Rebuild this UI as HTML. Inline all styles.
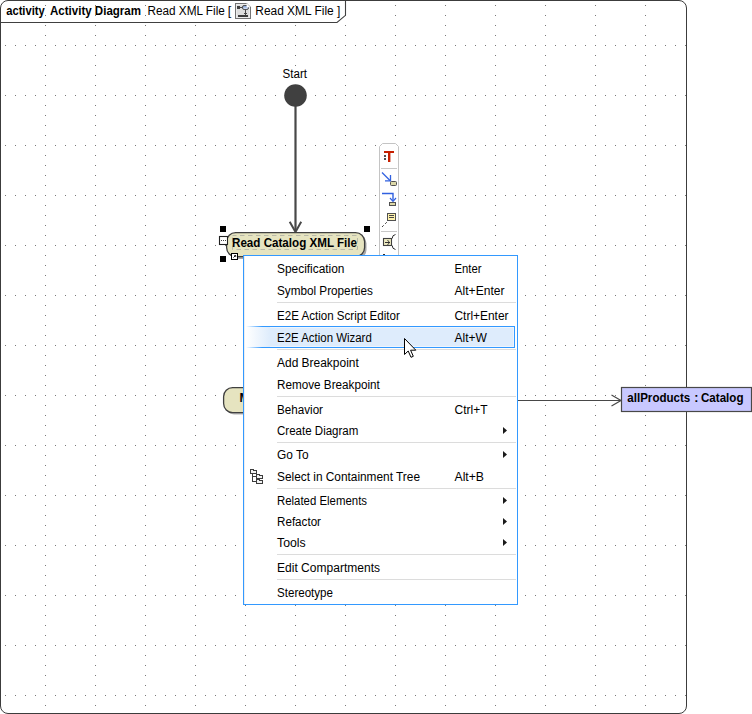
<!DOCTYPE html>
<html>
<head>
<meta charset="utf-8">
<title>Read XML File - Activity Diagram</title>
<style>
html,body{margin:0;padding:0;background:#fff;}
body{width:752px;height:714px;overflow:hidden;position:relative;font-family:"Liberation Sans",sans-serif;}
svg{position:absolute;left:0;top:0;display:block;}
text{font-family:"Liberation Sans",sans-serif;fill:#000;}
.b{font-weight:bold;}
.m{font-size:12px;}
</style>
</head>
<body>
<svg width="752" height="714" viewBox="0 0 752 714">
<defs>
  <pattern id="gh" x="0" y="0" width="10" height="50" patternUnits="userSpaceOnUse">
    <rect x="5" y="45" width="1" height="1" fill="#787878"/>
  </pattern>
  <pattern id="gv" x="0" y="0" width="50" height="10" patternUnits="userSpaceOnUse">
    <rect x="45" y="5" width="1" height="1" fill="#787878"/>
  </pattern>
  <clipPath id="frameclip"><rect x="1" y="1" width="685" height="712" rx="7" ry="7"/></clipPath>
  <linearGradient id="hl" x1="0" y1="0" x2="1" y2="0">
    <stop offset="0" stop-color="#ffffff"/>
    <stop offset="0.09" stop-color="#deecfc"/>
    <stop offset="1" stop-color="#deecfc"/>
  </linearGradient>
  <linearGradient id="hlb" x1="0" y1="0" x2="1" y2="0">
    <stop offset="0" stop-color="#ffffff"/>
    <stop offset="0.06" stop-color="#3399ff"/>
    <stop offset="1" stop-color="#3399ff"/>
  </linearGradient>
  <linearGradient id="blu" x1="0" y1="0" x2="0" y2="1">
    <stop offset="0" stop-color="#7090c8"/>
    <stop offset="1" stop-color="#e8f0ff"/>
  </linearGradient>
</defs>

<!-- grid -->
<g clip-path="url(#frameclip)">
  <rect x="0" y="0" width="687" height="714" fill="url(#gh)"/>
  <rect x="0" y="0" width="687" height="714" fill="url(#gv)"/>
</g>

<!-- diagram frame -->
<rect x="0.5" y="0.5" width="686" height="713" rx="7.5" ry="7.5" fill="none" stroke="#3c3c3c" stroke-width="1"/>
<path d="M0.5 22.5 H337 L345.5 15.3 V1" fill="none" stroke="#404040" stroke-width="1.1"/>

<!-- frame title -->
<text x="6.2" y="14.8" font-size="12.5" class="b" textLength="38.6" lengthAdjust="spacingAndGlyphs">activity</text>
<text x="50" y="14.8" font-size="12.5" class="b" textLength="91" lengthAdjust="spacingAndGlyphs">Activity Diagram</text>
<text x="147.5" y="14.8" font-size="12.5" textLength="77.3" lengthAdjust="spacingAndGlyphs">Read XML File</text>
<text x="227.7" y="14.8" font-size="12.5">[</text>
<text x="255.3" y="14.8" font-size="12.5" textLength="85" lengthAdjust="spacingAndGlyphs">Read XML File ]</text>

<!-- title icon -->
<g>
  <rect x="235.5" y="3.5" width="15" height="15" fill="#dedede" stroke="#747474"/>
  <rect x="236.5" y="4.5" width="13" height="13" fill="none" stroke="#ececec"/>
  <rect x="237" y="6" width="3" height="3" fill="#404040"/>
  <rect x="240" y="7" width="3" height="1" fill="#484848"/>
  <rect x="242.5" y="5.5" width="6" height="4" rx="1.6" fill="url(#blu)" stroke="#4c4c4c"/>
  <rect x="245" y="10" width="1" height="5" fill="#484848"/>
  <rect x="244" y="13" width="3" height="1" fill="#484848"/>
  <rect x="238" y="15" width="10" height="2" fill="#3c3c3c"/>
  <rect x="246.6" y="2.5" width="5" height="4.8" fill="#ffffff"/>
  <path d="M247 3.4 L250.7 7.1" fill="none" stroke="#8a8a8a" stroke-width="1" stroke-dasharray="1.2 0.8"/>
  <rect x="250" y="7" width="1" height="1" fill="#747474"/>
</g>

<!-- start node -->
<text x="282.5" y="78" font-size="12.5" textLength="24.5" lengthAdjust="spacingAndGlyphs">Start</text>
<line x1="295.5" y1="100" x2="295.5" y2="231" stroke="#484848" stroke-width="2.2"/>
<circle cx="295.5" cy="95.5" r="11.3" fill="#404040"/>
<path d="M289.7 221.8 L295.5 232 L301.2 221.8" fill="none" stroke="#484848" stroke-width="2"/>

<!-- hidden node (partly under menu) -->
<rect x="225" y="389.5" width="60" height="25" rx="9" fill="#b4b4b4"/>
<rect x="223.6" y="387.6" width="60" height="25" rx="9" fill="#e6e4c0" stroke="#404040" stroke-width="1.3"/>
<text x="239.5" y="402" font-size="12.5" class="b" textLength="24" lengthAdjust="spacingAndGlyphs">Map</text>

<!-- object flow line to pin -->
<line x1="517" y1="400.5" x2="621" y2="400.5" stroke="#484848" stroke-width="1.2"/>
<path d="M611.5 395 L621 400.5 L611.5 406" fill="none" stroke="#484848" stroke-width="1.2"/>
<rect x="621.5" y="387.5" width="130" height="24" fill="#c8c8ff" stroke="#484848" stroke-width="1.2"/>
<text x="627.3" y="402.3" font-size="12.5" class="b" textLength="63" lengthAdjust="spacingAndGlyphs">allProducts</text>
<text x="694.3" y="402.3" font-size="12.5" class="b">:</text>
<text x="701" y="402.3" font-size="12.5" class="b" textLength="42.5" lengthAdjust="spacingAndGlyphs">Catalog</text>

<!-- action node -->
<rect x="228.5" y="234.5" width="138" height="24.5" rx="9" fill="#a8a8a8"/>
<rect x="226.6" y="232.6" width="138" height="24" rx="9" fill="#e6e4c0" stroke="#404040" stroke-width="1.3"/>
<rect x="232.5" y="235.5" width="125" height="14" fill="none" stroke="#b8b8a8" stroke-width="1" stroke-dasharray="4.5 3.5" stroke-dashoffset="0.5"/>
<text x="232" y="246.7" font-size="12.5" class="b" textLength="125" lengthAdjust="spacingAndGlyphs">Read Catalog XML File</text>

<!-- selection handles -->
<rect x="220" y="226" width="6" height="6" fill="#000"/>
<rect x="364" y="226" width="6" height="6" fill="#000"/>
<rect x="220" y="256" width="6" height="6" fill="#000"/>
<rect x="219.5" y="236.5" width="8" height="8" fill="#fff" stroke="#202020" stroke-width="1.1"/>
<rect x="221" y="240" width="1" height="1" fill="#404040"/><rect x="223" y="240" width="1" height="1" fill="#404040"/><rect x="225" y="240" width="1" height="1" fill="#404040"/>
<rect x="231.5" y="253.5" width="6" height="6" fill="#fff" stroke="#000"/>
<path d="M233.5 257.5 L235.5 255.5 M234.3 255.5 H235.7 V256.9" fill="none" stroke="#000" stroke-width="0.9"/>

<!-- smart manipulator toolbar -->
<path d="M379.5 256 V146.5 L382.5 143.5 H395.5 L398.5 146.5 V256" fill="#fff" stroke="#c4c4c4"/>
<line x1="381" y1="168.5" x2="397" y2="168.5" stroke="#c8c8c8"/>
<line x1="381" y1="231.5" x2="397" y2="231.5" stroke="#c8c8c8"/>
<!-- T icon -->
<rect x="384" y="151" width="10" height="2" fill="#c62000"/>
<rect x="388" y="151" width="2.4" height="11" fill="#c62000"/>
<rect x="384" y="155" width="2" height="2" fill="#505050"/>
<rect x="384" y="158" width="2" height="2" fill="#505050"/>
<!-- diagonal arrow icon -->
<path d="M382 172.5 L390 180.5" stroke="#3060e0" stroke-width="1.3" fill="none"/>
<path d="M390.5 175 V180.8 H385" stroke="#3060e0" stroke-width="1.3" fill="none"/>
<rect x="390.5" y="181.5" width="6" height="4" rx="1" fill="#dcd8a8" stroke="#505050"/>
<!-- right angle arrow icon -->
<path d="M382 193.5 H393 V201" stroke="#3060e0" stroke-width="1.4" fill="none"/>
<path d="M390 198 L393 201.3 L396 198" stroke="#3060e0" stroke-width="1.2" fill="none"/>
<rect x="389.5" y="202.5" width="6" height="3" fill="#dcd8a8" stroke="#505050"/>
<!-- note icon -->
<rect x="387.5" y="213.5" width="8" height="7" fill="#fff2ac" stroke="#505050"/>
<rect x="389" y="215" width="5" height="1" fill="#484848"/>
<rect x="389" y="217" width="5" height="1" fill="#484848"/>
<path d="M382 227 L387 222" stroke="#404040" stroke-width="1" stroke-dasharray="2.4 2" fill="none"/>
<!-- pin icon -->
<rect x="383.5" y="238.5" width="8" height="7" fill="#eeeac0" stroke="#404040" stroke-width="1.1"/>
<rect x="385" y="242" width="5" height="1" fill="#303030"/>
<path d="M387.5 240 L389.5 242.5 L387.5 245" stroke="#303030" stroke-width="0.9" fill="none"/>
<path d="M395.5 234.5 Q392.2 235 392.2 238.5 M392.2 245.5 Q392.2 249 395.5 249.5" stroke="#303030" stroke-width="1" fill="none"/>
<rect x="383" y="254" width="2" height="1" fill="#303030"/>

<!-- context menu -->
<rect x="243.5" y="255.5" width="274" height="349" fill="#ffffff" stroke="#3399ff"/>
<rect x="244" y="256" width="1" height="348" fill="#eeeeee"/>

<!-- highlight row -->
<rect x="246" y="326" width="269" height="22" fill="url(#hl)"/>
<rect x="246" y="326" width="269" height="1" fill="url(#hlb)"/>
<rect x="246" y="347" width="269" height="1" fill="url(#hlb)"/>
<rect x="514" y="326" width="1" height="22" fill="#3399ff"/>
<rect x="270" y="327" width="244" height="1" fill="#eef5fe"/>
<rect x="270" y="346" width="244" height="1" fill="#eef5fe"/>
<rect x="513" y="327" width="1" height="20" fill="#eef5fe"/>

<!-- separators -->
<g fill="#dcdcdc">
<rect x="277" y="302" width="239" height="1"/>
<rect x="277" y="349" width="239" height="1"/>
<rect x="277" y="396" width="239" height="1"/>
<rect x="277" y="442" width="239" height="1"/>
<rect x="277" y="488" width="239" height="1"/>
<rect x="277" y="554" width="239" height="1"/>
<rect x="277" y="579" width="239" height="1"/>
</g>

<!-- menu items -->
<g class="m" font-size="12">
<text x="277" y="273" textLength="67.5" lengthAdjust="spacingAndGlyphs">Specification</text>
<text x="277" y="295" textLength="95.8" lengthAdjust="spacingAndGlyphs">Symbol Properties</text>
<text x="277" y="319.6" textLength="122.8" lengthAdjust="spacingAndGlyphs">E2E Action Script Editor</text>
<text x="277" y="341.6" textLength="94.8" lengthAdjust="spacingAndGlyphs">E2E Action Wizard</text>
<text x="277" y="367" textLength="81.8" lengthAdjust="spacingAndGlyphs">Add Breakpoint</text>
<text x="277" y="389" textLength="102.8" lengthAdjust="spacingAndGlyphs">Remove Breakpoint</text>
<text x="277" y="413.6" textLength="46" lengthAdjust="spacingAndGlyphs">Behavior</text>
<text x="277" y="435" textLength="81.4" lengthAdjust="spacingAndGlyphs">Create Diagram</text>
<text x="277" y="459" textLength="31.5" lengthAdjust="spacingAndGlyphs">Go To</text>
<text x="277" y="481" textLength="143" lengthAdjust="spacingAndGlyphs">Select in Containment Tree</text>
<text x="277" y="505" textLength="90" lengthAdjust="spacingAndGlyphs">Related Elements</text>
<text x="277" y="526" textLength="44" lengthAdjust="spacingAndGlyphs">Refactor</text>
<text x="277" y="547" textLength="28.7" lengthAdjust="spacingAndGlyphs">Tools</text>
<text x="277" y="572" textLength="103" lengthAdjust="spacingAndGlyphs">Edit Compartments</text>
<text x="277" y="597" textLength="56" lengthAdjust="spacingAndGlyphs">Stereotype</text>

<text x="454.5" y="273" textLength="27" lengthAdjust="spacingAndGlyphs">Enter</text>
<text x="454.5" y="295" textLength="50" lengthAdjust="spacingAndGlyphs">Alt+Enter</text>
<text x="454.5" y="319.6" textLength="54" lengthAdjust="spacingAndGlyphs">Ctrl+Enter</text>
<text x="454.5" y="341.6" textLength="32.5" lengthAdjust="spacingAndGlyphs">Alt+W</text>
<text x="454.5" y="413.6" textLength="33" lengthAdjust="spacingAndGlyphs">Ctrl+T</text>
<text x="454.5" y="481" textLength="29.5" lengthAdjust="spacingAndGlyphs">Alt+B</text>
</g>

<!-- submenu arrows -->
<g fill="#1a1a1a">
<path d="M503 427 L507 430.5 L503 434 Z"/>
<path d="M503 451 L507 454.5 L503 458 Z"/>
<path d="M503 497 L507 500.5 L503 504 Z"/>
<path d="M503 518 L507 521.5 L503 525 Z"/>
<path d="M503 539 L507 542.5 L503 546 Z"/>
</g>

<!-- containment tree icon -->
<g fill="#f2f2f2" stroke="#3c3c3c" stroke-width="1" shape-rendering="crispEdges">
<path d="M250.5 473.5 V469.5 H253.5 V470.5 H256.5 V473.5 Z"/>
<path d="M256.5 478.5 V474.5 H259.5 V475.5 H262.5 V478.5 Z"/>
<path d="M256.5 483.5 V479.5 H259.5 V480.5 H262.5 V483.5 Z"/>
<path d="M252.5 474 V481.5 H256 M252.5 476.5 H256" fill="none"/>
</g>

<!-- mouse cursor -->
<path d="M404.5 338.5 V354.5 L408.2 351 L411 357.3 L413.3 356.3 L410.6 350.2 H415.8 Z" fill="#fff" stroke="#000" stroke-width="1" stroke-linejoin="miter"/>
</svg>
</body>
</html>
